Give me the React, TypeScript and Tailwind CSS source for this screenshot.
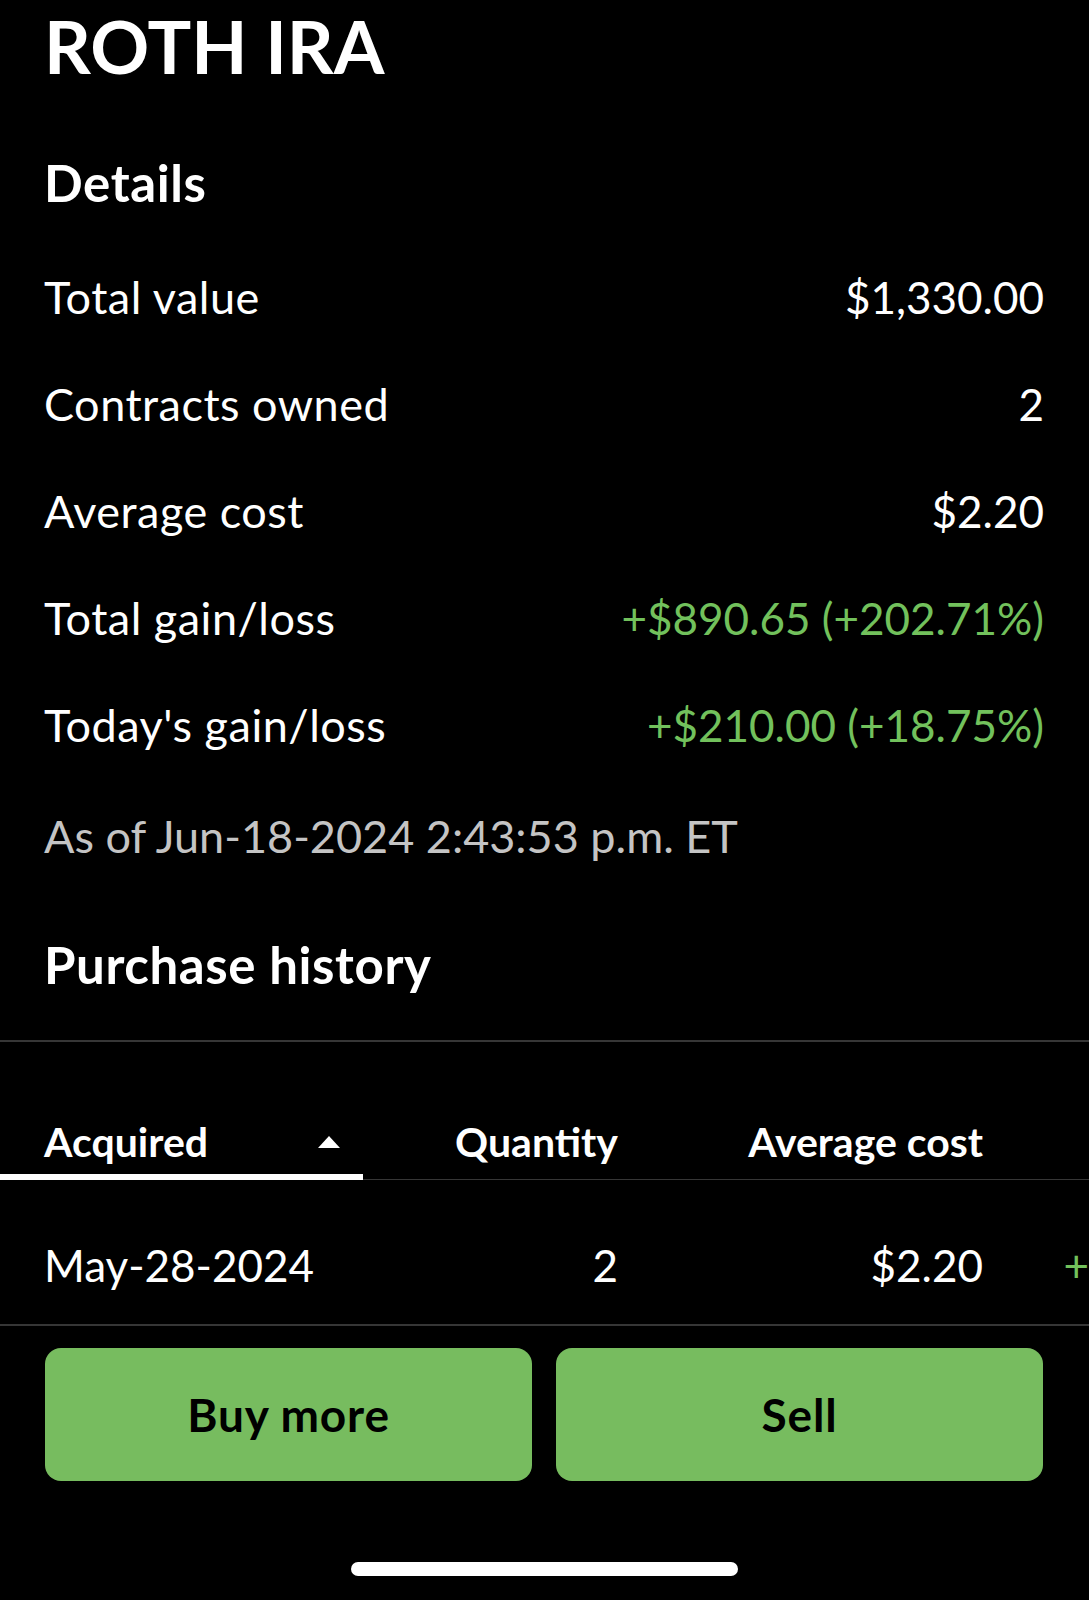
import React from 'react';

interface DetailRow {
  label: string;
  value: string;
  gain?: boolean;
}

const DETAILS: DetailRow[] = [
  { label: 'Total value', value: '$1,330.00' },
  { label: 'Contracts owned', value: '2' },
  { label: 'Average cost', value: '$2.20' },
  { label: 'Total gain/loss', value: '+$890.65 (+202.71%)', gain: true },
  { label: "Today's gain/loss", value: '+$210.00 (+18.75%)', gain: true },
];

const SortUp = () => (
  <svg width="22" height="12" viewBox="0 0 22 12" className="shrink-0">
    <path d="M11 0 L22 12 L0 12 Z" fill="#ffffff" />
  </svg>
);

export default function App() {
  return (
    <div className="min-h-[1600px] w-full overflow-hidden bg-black font-['Lato',sans-serif] text-white">
      <div className="pl-[44px] pr-[45px] pt-[6px]">
        <h1 className="text-[73px] font-bold leading-[80px]">ROTH IRA</h1>
        <h2 className="mt-[67px] text-[51px] font-bold leading-[60px] tracking-[0.6px]">Details</h2>

        <div className="mt-[31px]">
          {DETAILS.map((row) => (
            <div key={row.label} className="flex h-[107px] items-center justify-between leading-[107px]">
              <span className="text-[45px] tracking-[0.5px]">{row.label}</span>
              <span className={row.gain ? 'text-[44px] text-[#72c15c]' : 'text-[44px] text-white'}>{row.value}</span>
            </div>
          ))}
        </div>

        <p className="mt-[4px] text-[45px] leading-[107px] text-[#c4c4c4]">
          As of Jun-18-2024 2:43:53 p.m. ET
        </p>

        <h2 className="mt-[45px] text-[51px] font-bold leading-[60px] tracking-[0.6px]">Purchase history</h2>
      </div>

      <div className="mt-[45px] h-[2px] bg-[#363636]" />

      <div className="overflow-hidden">
        <div className="flex w-[1486px]">
          <div className="flex h-[138px] w-[363px] items-end border-b-[6px] border-white pb-[7px] pl-[44px] pr-[23px]">
            <div className="flex h-[50px] w-full items-center justify-between">
              <span className="text-[41px] font-bold leading-[50px]">Acquired</span>
              <SortUp />
            </div>
          </div>
          <div className="flex h-[138px] w-[255px] items-end justify-end border-b border-[#363636] pb-[12px]">
            <span className="text-[41px] font-bold leading-[50px]">Quantity</span>
          </div>
          <div className="flex h-[138px] w-[365px] items-end justify-end border-b border-[#363636] pb-[12px]">
            <span className="text-[41px] font-bold leading-[50px]">Average cost</span>
          </div>
          <div className="flex h-[138px] w-[503px] items-end justify-end border-b border-[#363636] pb-[12px]">
            <span className="text-[41px] font-bold leading-[50px]">Total gain/loss</span>
          </div>
        </div>

        <div className="flex h-[146px] w-[1486px] border-b-2 border-[#363636] text-[44px] leading-[60px]">
          <div className="w-[363px] pl-[44px] pt-[55px]">May-28-2024</div>
          <div className="w-[255px] pt-[55px] text-right">2</div>
          <div className="w-[365px] pt-[55px] text-right">$2.20</div>
          <div className="w-[503px] pt-[55px] text-right text-[#72c15c]">+$890.65 (+202.71%)</div>
        </div>
      </div>

      <div className="mt-[22px] flex gap-[24px] pl-[45px] pr-[46px]">
        <button className="h-[133px] flex-1 rounded-[16px] bg-[#77bc5f] text-[46px] font-bold tracking-[0.8px] text-black">
          Buy more
        </button>
        <button className="h-[133px] flex-1 rounded-[16px] bg-[#77bc5f] text-[46px] font-bold tracking-[0.8px] text-black">
          Sell
        </button>
      </div>

      <div className="mx-auto mt-[81px] h-[14px] w-[387px] rounded-full bg-white" />
    </div>
  );
}
